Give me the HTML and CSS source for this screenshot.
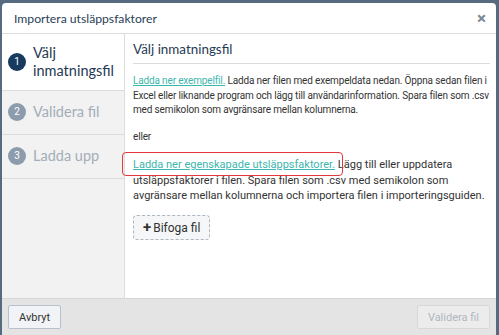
FILE: index.html
```html
<!DOCTYPE html>
<html lang="sv">
<head>
  <meta charset="UTF-8" />
  <title>Importera utsläppsfaktorer</title>
  <link rel="stylesheet" href="styles.css">
</head>
<body>
  <div class="modal">
    <div class="modal-header">
      <span class="modal-title">Importera utsläppsfaktorer</span>
      <span class="close">&times;</span>
    </div>

    <div class="modal-body">
      <div class="steps">
        <div class="step active">
          <span class="num">1</span>
          <span class="label">Välj inmatningsfil</span>
        </div>
        <div class="step">
          <span class="num">2</span>
          <span class="label">Validera fil</span>
        </div>
        <div class="step">
          <span class="num">3</span>
          <span class="label">Ladda upp</span>
        </div>
      </div>

      <div class="content">
        <h3>Välj inmatningsfil</h3>
        <p class="small"><a href="#">Ladda ner exempelfil.</a> Ladda ner filen med exempeldata nedan. Öppna sedan filen i Excel eller liknande program och lägg till användarinformation. Spara filen som .csv med semikolon som avgränsare mellan kolumnerna.</p>
        <p class="small">eller</p>
        <p class="text"><span class="marked"><a href="#">Ladda ner egenskapade utsläppsfaktorer.</a></span> Lägg till eller uppdatera utsläppsfaktorer i filen. Spara filen som .csv med semikolon som avgränsare mellan kolumnerna och importera filen i importeringsguiden.</p>
        <button class="attach"><span class="plus">+</span>Bifoga fil</button>
      </div>
    </div>

    <div class="modal-footer">
      <button class="btn">Avbryt</button>
      <button class="btn" disabled>Validera fil</button>
    </div>
  </div>
</body>
</html>
```

FILE: styles.css
```css
html, body {
  height: 100%;
}
body {
  margin: 0;
  padding: 3px 3px 0 2px;
  box-sizing: border-box;
  background: #566a80;
  font-family: Roboto, "Liberation Sans", Arial, sans-serif;
  color: #333;
}
.modal {
  height: 100%;
  background: #fff;
  border-radius: 4px 4px 0 0;
  display: flex;
  flex-direction: column;
  overflow: hidden;
}
.modal-header {
  height: 30px;
  border-bottom: 1px solid #dcdcdc;
  display: flex;
  align-items: center;
  justify-content: space-between;
  padding: 0 10px 0 12px;
}
.modal-title {
  font-family: Lato, "Noto Sans", sans-serif;
  font-size: 12.2px;
  color: #2a4057;
}
.close {
  font-size: 17px;
  font-weight: bold;
  color: #7a8896;
  line-height: 1;
}
.modal-body {
  flex: 1;
  display: flex;
}
.steps {
  width: 122px;
  background: #f2f2f2;
  border-right: 1px solid #dcdcdc;
}
.step {
  display: flex;
  align-items: center;
  gap: 7px;
  padding: 11px 6px 12px;
  border-bottom: 1px solid #dcdcdc;
  font-family: Lato, "Noto Sans", sans-serif;
  font-size: 14.5px;
  line-height: 20px;
  color: #a3adb8;
}
.step.active {
  background: #fff;
  color: #1f3a55;
  padding: 10px 6px 10px;
  line-height: 18px;
}
.num {
  flex: none;
  width: 18px;
  height: 18px;
  border-radius: 50%;
  background: #8d9cac;
  color: #fff;
  font-family: Roboto, sans-serif;
  font-size: 10px;
  line-height: 18px;
  text-align: center;
}
.step.active .num {
  background: #173a5e;
}
.content {
  flex: 1;
  padding: 0 6px 0 8px;
}
.content h3 {
  margin: 0;
  padding: 7px 0 5px;
  border-bottom: 1px solid #dcdcdc;
  font-family: Lato, "Noto Sans", sans-serif;
  font-weight: normal;
  font-size: 13.4px;
  line-height: 17px;
  color: #1f3a55;
}
.content p {
  margin: 0;
}
.small {
  font-size: 10px;
  letter-spacing: -0.15px;
  line-height: 14.5px;
  padding-top: 10px;
}
.small + .small {
  padding-top: 12px;
}
.text {
  font-size: 11px;
  line-height: 15.5px;
  padding-top: 13px;
}
.content a {
  color: #3db6ad;
}
.marked {
  position: relative;
}
.marked::after {
  content: "";
  position: absolute;
  left: -11px;
  right: -8px;
  top: -6px;
  bottom: -5px;
  border: 1.5px solid #e2383e;
  border-radius: 4px;
}
.attach {
  display: block;
  margin-top: 11px;
  padding: 0 9px;
  height: 25px;
  border: 1px dashed #aeb6bf;
  border-radius: 4px;
  background: #f4f6f8;
  font-family: Roboto, "Liberation Sans", sans-serif;
  font-size: 12px;
  color: #333;
}
.plus {
  font-size: 15px;
  font-weight: bold;
  margin-right: 2px;
}
.modal-footer {
  height: 36px;
  flex: none;
  background: #e4e4e4;
  border-top: 1px solid #d6d6d6;
  display: flex;
  align-items: center;
  justify-content: space-between;
  padding: 0 6px;
}
.btn {
  height: 24px;
  padding: 0 10px;
  background: #f1f3f6;
  border: 1px solid #b8c1cb;
  border-radius: 2px;
  font-family: Roboto, "Liberation Sans", sans-serif;
  font-size: 11px;
  color: #333;
}
.btn:disabled {
  background: #ececec;
  border-color: #d8d8d8;
  color: #b0b7bf;
}
```
